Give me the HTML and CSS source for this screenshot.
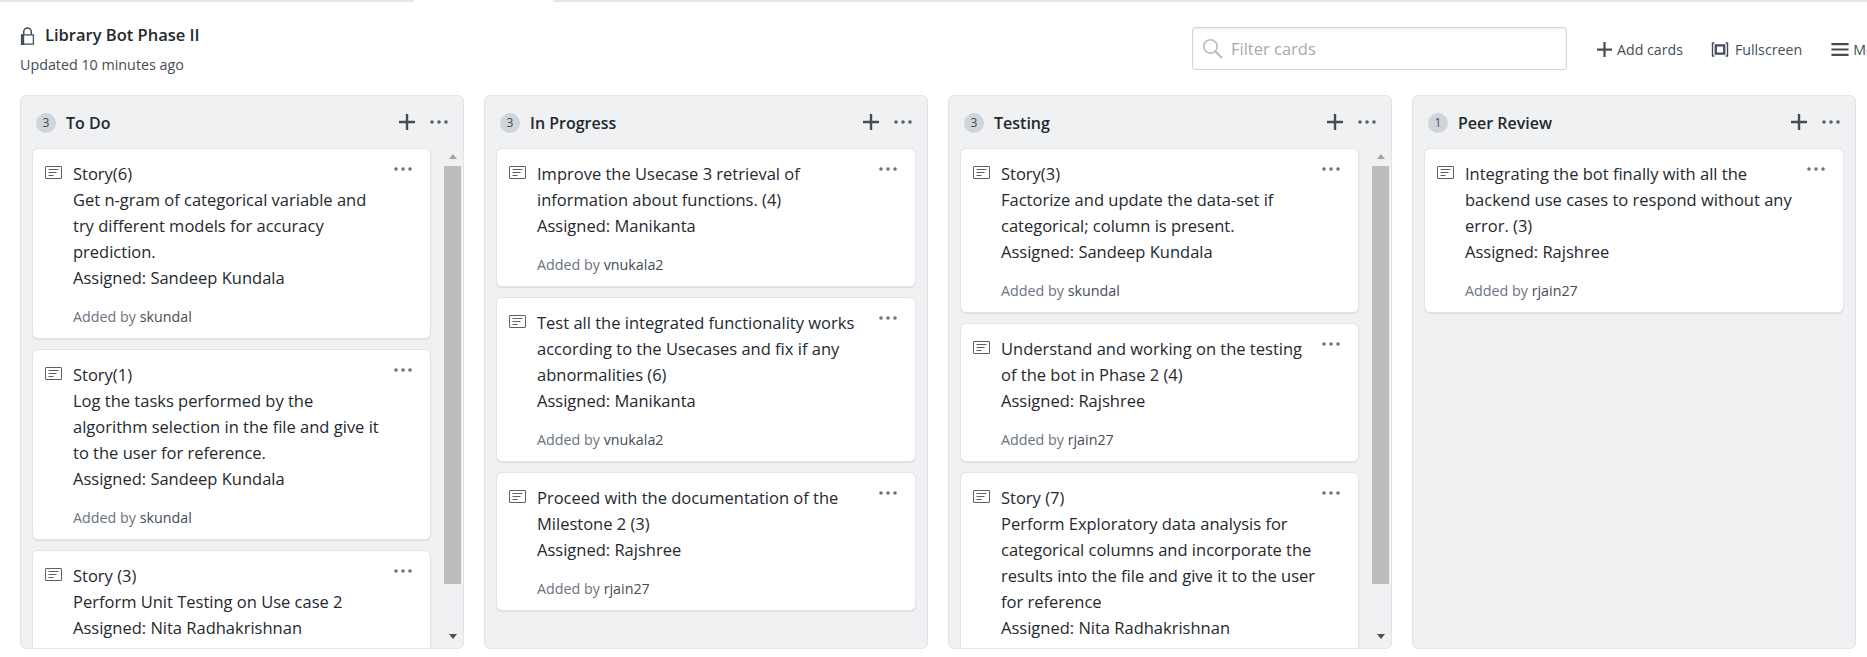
FILE: index.html
```html
<html>
	<head>
		<title>Library Bot Phase II</title>
		<link rel="stylesheet" href="styles.css">
	</head>
	<body>
		<svg class="defs">
			<symbol id="i-note" viewBox="0 0 17 13">
				<path d="M1 .5h15a.5.5 0 0 1 .5.5v11a.5.5 0 0 1-.5.5H1a.5.5 0 0 1-.5-.5V1A.5.5 0 0 1 1 .5z" fill="none" stroke="currentColor"/>
				<path d="M3.5 3.5h10M3.5 6.5h8M3.5 9.5h5" fill="none" stroke="currentColor" stroke-width="1.2"/>
			</symbol>
			<symbol id="i-dots" viewBox="0 0 18 4">
				<circle cx="2" cy="2" r="1.8" fill="currentColor"/>
				<circle cx="9" cy="2" r="1.8" fill="currentColor"/>
				<circle cx="16" cy="2" r="1.8" fill="currentColor"/>
			</symbol>
			<symbol id="i-plus" viewBox="0 0 16 16">
				<path d="M8 0v16M0 8h16" fill="none" stroke="currentColor" stroke-width="2.4"/>
			</symbol>
		</svg>

		<div class="topline"><span class="topline_gap"></span></div>

		<div class="head">
			<div class="head_info">
				<div class="head_title">
					<svg class="lock" viewBox="0 0 16 19"><path d="M4 8V5a4 4 0 0 1 8 0v3" fill="none" stroke="currentColor" stroke-width="1.6"/><path d="M1.7 8.300h12.600v9.900H1.700z" fill="none" stroke="currentColor" stroke-width="1.4"/><path d="M1 8h3.500v11H1z" fill="currentColor"/></svg>
					<span>Library Bot Phase II</span>
				</div>
				<div class="head_updated">Updated 10 minutes ago</div>
			</div>
			<div class="filter">
				<svg class="filter_icon" viewBox="0 0 20 20"><circle cx="7.500" cy="7.500" r="6.700" fill="none" stroke="currentColor" stroke-width="1.600"/><path d="M12.500 12.500l6.500 6.500" fill="none" stroke="currentColor" stroke-width="2"/></svg>
				<span>Filter cards</span>
			</div>
			<div class="tool tool_add"><svg class="tool_plus"><use href="#i-plus"/></svg>Add cards</div>
			<div class="tool tool_full">
				<svg class="tool_icon" viewBox="0 0 18 16"><path d="M3 1H1v14h2M15 1h2v14h-2" fill="none" stroke="currentColor" stroke-width="1.500"/><path d="M4.500 3.500h9v9h-9z" fill="none" stroke="currentColor" stroke-width="2.400"/></svg>
				Fullscreen
			</div>
			<div class="tool tool_menu">
				<svg class="tool_icon tool_icon_menu" viewBox="0 0 16 14"><path d="M0 2h16M0 7h16M0 12h16" fill="none" stroke="currentColor" stroke-width="2"/></svg>
				Menu
			</div>
		</div>

		<div class="board">
			<div class="column">
				<div class="column_head">
					<span class="count">3</span>
					<span class="column_name">To Do</span>
					<svg class="column_plus"><use href="#i-plus"/></svg>
					<svg class="column_dots"><use href="#i-dots"/></svg>
				</div>
				<div class="column_body">
					<div class="cards cards_scroll">
						<div class="card">
							<svg class="card_icon"><use href="#i-note"/></svg>
							<div class="card_main">
								<div class="card_text">Story(6)<br>Get n-gram of categorical variable and<br>try different models for accuracy<br>prediction.<br>Assigned: Sandeep Kundala</div>
								<div class="card_by">Added by <b>skundal</b></div>
							</div>
							<svg class="card_dots"><use href="#i-dots"/></svg>
						</div>
						<div class="card">
							<svg class="card_icon"><use href="#i-note"/></svg>
							<div class="card_main">
								<div class="card_text">Story(1)<br>Log the tasks performed by the<br>algorithm selection in the file and give it<br>to the user for reference.<br>Assigned: Sandeep Kundala</div>
								<div class="card_by">Added by <b>skundal</b></div>
							</div>
							<svg class="card_dots"><use href="#i-dots"/></svg>
						</div>
						<div class="card">
							<svg class="card_icon"><use href="#i-note"/></svg>
							<div class="card_main">
								<div class="card_text">Story (3)<br>Perform Unit Testing on Use case 2<br>Assigned: Nita Radhakrishnan</div>
								<div class="card_by">Added by <b>skundal</b></div>
							</div>
							<svg class="card_dots"><use href="#i-dots"/></svg>
						</div>
					</div>
					<div class="scrollbar">
						<span class="arrow_up"></span>
						<span class="thumb"></span>
						<span class="arrow_down"></span>
					</div>
				</div>
			</div>

			<div class="column">
				<div class="column_head">
					<span class="count">3</span>
					<span class="column_name">In Progress</span>
					<svg class="column_plus"><use href="#i-plus"/></svg>
					<svg class="column_dots"><use href="#i-dots"/></svg>
				</div>
				<div class="column_body">
					<div class="cards">
						<div class="card">
							<svg class="card_icon"><use href="#i-note"/></svg>
							<div class="card_main">
								<div class="card_text">Improve the Usecase 3 retrieval of<br>information about functions. (4)<br>Assigned: Manikanta</div>
								<div class="card_by">Added by <b>vnukala2</b></div>
							</div>
							<svg class="card_dots"><use href="#i-dots"/></svg>
						</div>
						<div class="card">
							<svg class="card_icon"><use href="#i-note"/></svg>
							<div class="card_main">
								<div class="card_text">Test all the integrated functionality works<br>according to the Usecases and fix if any<br>abnormalities (6)<br>Assigned: Manikanta</div>
								<div class="card_by">Added by <b>vnukala2</b></div>
							</div>
							<svg class="card_dots"><use href="#i-dots"/></svg>
						</div>
						<div class="card">
							<svg class="card_icon"><use href="#i-note"/></svg>
							<div class="card_main">
								<div class="card_text">Proceed with the documentation of the<br>Milestone 2 (3)<br>Assigned: Rajshree</div>
								<div class="card_by">Added by <b>rjain27</b></div>
							</div>
							<svg class="card_dots"><use href="#i-dots"/></svg>
						</div>
					</div>
				</div>
			</div>

			<div class="column">
				<div class="column_head">
					<span class="count">3</span>
					<span class="column_name">Testing</span>
					<svg class="column_plus"><use href="#i-plus"/></svg>
					<svg class="column_dots"><use href="#i-dots"/></svg>
				</div>
				<div class="column_body">
					<div class="cards cards_scroll">
						<div class="card">
							<svg class="card_icon"><use href="#i-note"/></svg>
							<div class="card_main">
								<div class="card_text">Story(3)<br>Factorize and update the data-set if<br>categorical; column is present.<br>Assigned: Sandeep Kundala</div>
								<div class="card_by">Added by <b>skundal</b></div>
							</div>
							<svg class="card_dots"><use href="#i-dots"/></svg>
						</div>
						<div class="card">
							<svg class="card_icon"><use href="#i-note"/></svg>
							<div class="card_main">
								<div class="card_text">Understand and working on the testing<br>of the bot in Phase 2 (4)<br>Assigned: Rajshree</div>
								<div class="card_by">Added by <b>rjain27</b></div>
							</div>
							<svg class="card_dots"><use href="#i-dots"/></svg>
						</div>
						<div class="card">
							<svg class="card_icon"><use href="#i-note"/></svg>
							<div class="card_main">
								<div class="card_text">Story (7)<br>Perform Exploratory data analysis for<br>categorical columns and incorporate the<br>results into the file and give it to the user<br>for reference<br>Assigned: Nita Radhakrishnan</div>
								<div class="card_by">Added by <b>skundal</b></div>
							</div>
							<svg class="card_dots"><use href="#i-dots"/></svg>
						</div>
					</div>
					<div class="scrollbar">
						<span class="arrow_up"></span>
						<span class="thumb"></span>
						<span class="arrow_down"></span>
					</div>
				</div>
			</div>

			<div class="column">
				<div class="column_head">
					<span class="count">1</span>
					<span class="column_name">Peer Review</span>
					<svg class="column_plus"><use href="#i-plus"/></svg>
					<svg class="column_dots"><use href="#i-dots"/></svg>
				</div>
				<div class="column_body">
					<div class="cards">
						<div class="card">
							<svg class="card_icon"><use href="#i-note"/></svg>
							<div class="card_main">
								<div class="card_text">Integrating the bot finally with all the<br>backend use cases to respond without any<br>error. (3)<br>Assigned: Rajshree</div>
								<div class="card_by">Added by <b>rjain27</b></div>
							</div>
							<svg class="card_dots"><use href="#i-dots"/></svg>
						</div>
					</div>
				</div>
			</div>
		</div>
	</body>
</html>
```

FILE: styles.css
```css
html, body	{
	height: 100%;
}
body	{
	margin: 0;
	display: flex;
	flex-direction: column;
	overflow: hidden;
	background: white;
	color: #24292e;
	font-family: "Open Sans", "Noto Sans", sans-serif;
	font-size: 16.5px;
}
.defs	{
	display: none;
}
.topline	{
	height: 2px;
	flex: none;
	background: #e4e6ea;
}
.topline_gap	{
	display: block;
	width: 139px;
	height: 2px;
	margin-left: 414px;
	background: white;
}
.head	{
	flex: none;
	height: 93px;
	display: flex;
	align-items: flex-start;
	padding-left: 20px;
	white-space: nowrap;
}
.head_info	{
	width: 1172px;
	padding-top: 22px;
	flex: none;
}
.head_title	{
	display: flex;
	align-items: center;
	gap: 10px;
	height: 20px;
	font-size: 16.500px;
	font-weight: 600;
}
.lock	{
	width: 15px;
	height: 18px;
	margin-top: 3px;
	color: #444d56;
}
.head_updated	{
	margin-top: 11px;
	font-size: 14.300px;
	line-height: 20px;
	color: #444d56;
}
.filter	{
	box-sizing: border-box;
	flex: none;
	width: 375px;
	height: 43px;
	margin-top: 25px;
	padding-left: 10px;
	display: flex;
	align-items: center;
	gap: 8px;
	border: 1px solid #d1d5da;
	border-radius: 3px;
	color: #a3aab1;
	font-size: 16.500px;
	box-shadow: inset 0 1px 2px rgba(27, 31, 35, .075);
}
.filter_icon	{
	width: 20px;
	height: 20px;
	color: #b4b9bf;
}
.tool	{
	flex: none;
	display: flex;
	align-items: center;
	height: 20px;
	margin-top: 37px;
	font-size: 14.200px;
	color: #444d56;
}
.tool_add	{
	margin-left: 30px;
}
.tool_full	{
	margin-left: 28px;
}
.tool_menu	{
	margin-left: 29px;
}
.tool_plus	{
	width: 15px;
	height: 15px;
	margin-right: 5px;
}
.tool_icon	{
	width: 18px;
	height: 15px;
	margin-right: 6px;
}
.tool_icon_menu	{
	margin-right: 4px;
}
.board	{
	flex: 1;
	min-height: 0;
	display: flex;
	gap: 20px;
	padding: 0 11px 8px 20px;
}
.column	{
	box-sizing: border-box;
	flex: none;
	width: 444px;
	display: flex;
	flex-direction: column;
	overflow: hidden;
	background: #eff1f3;
	border: 1px solid #e1e4e8;
	border-radius: 6px;
}
.column_head	{
	flex: none;
	height: 52px;
	display: flex;
	align-items: center;
	padding: 0 15px 0 15px;
}
.count	{
	width: 20px;
	height: 20px;
	margin-top: 2px;
	border-radius: 50%;
	background: #d1d5da;
	color: #444d56;
	font-size: 12px;
	line-height: 20px;
	text-align: center;
}
.column_name	{
	flex: 1;
	margin: 2px 0 0 10px;
	font-size: 16px;
	font-weight: 600;
}
.column_plus	{
	width: 16px;
	height: 16px;
	color: #444d56;
}
.column_dots	{
	width: 18px;
	height: 4px;
	margin-left: 15px;
	color: #586069;
}
.column_body	{
	flex: 1;
	min-height: 0;
	display: flex;
	padding-left: 11px;
}
.cards	{
	flex: 1;
	min-width: 0;
	display: flex;
	flex-direction: column;
	gap: 10px;
	padding-right: 11px;
	overflow: hidden;
}
.cards_scroll	{
	padding-right: 13px;
}
.scrollbar	{
	flex: none;
	width: 17px;
	margin-right: 2px;
	display: flex;
	flex-direction: column;
	align-items: center;
}
.thumb	{
	width: 17px;
	height: 418px;
	margin-top: 7px;
	background: #bcbcbc;
}
.arrow_up	{
	margin-top: 6px;
	border: 4px solid transparent;
	border-top: 0;
	border-bottom: 5px solid #a3a3a3;
}
.arrow_down	{
	margin-top: 50px;
	border: 4px solid transparent;
	border-bottom: 0;
	border-top: 5px solid #505050;
}
.card	{
	box-sizing: border-box;
	flex: none;
	display: flex;
	align-items: flex-start;
	padding: 12px 18px 11px 12px;
	background: white;
	border: 1px solid #e1e4e8;
	border-radius: 6px;
	box-shadow: 0 1px 1px rgba(27, 31, 35, .1);
}
.card_icon	{
	flex: none;
	width: 17px;
	height: 13px;
	margin-top: 5px;
	color: #586069;
}
.card_main	{
	flex: 1;
	margin-left: 11px;
}
.card_text	{
	line-height: 26px;
	white-space: nowrap;
}
.card_by	{
	margin-top: 16px;
	font-size: 14.300px;
	line-height: 20px;
	color: #6a737d;
}
.card_by b	{
	font-weight: normal;
	color: #444d56;
}
.card_dots	{
	flex: none;
	width: 18px;
	height: 4px;
	margin-top: 6px;
	color: #6a737d;
}
```
